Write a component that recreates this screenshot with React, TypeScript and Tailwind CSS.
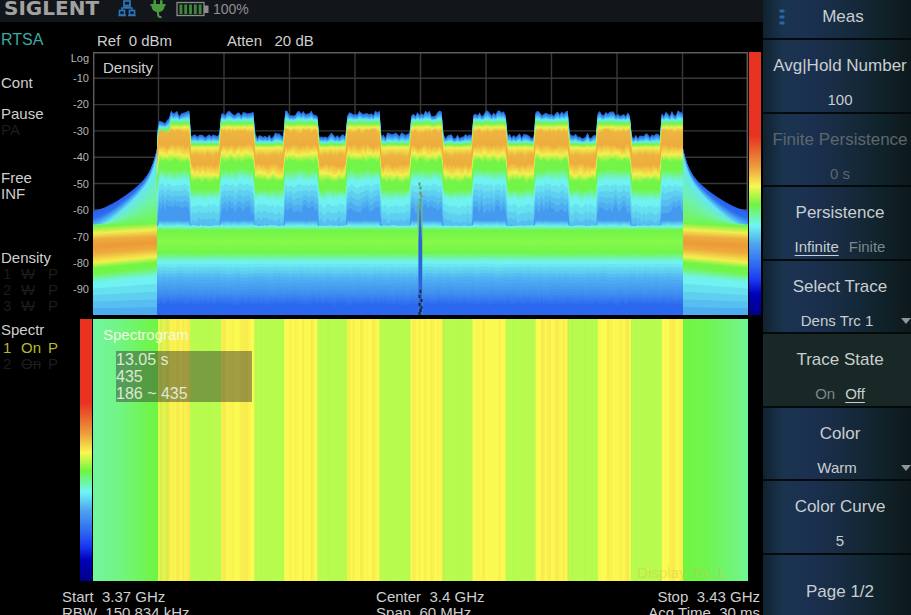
import { useState } from "react";
import type { ReactNode } from "react";

const W = 654;
const H = 262;

// edges of the raised carriers, in plot units
const CARRIERS = [
  [65, 97],
  [128, 161],
  [191, 224],
  [254, 286],
  [317, 349],
  [379, 412],
  [442, 474],
  [504, 537],
  [568, 589],
];
const BAND_START = 64;
const BAND_END = 589;

const random = (seed: number) => {
  let s = seed;
  return () => {
    s = (s * 16807) % 2147483647;
    return s / 2147483647;
  };
};

const isCarrier = (x: number) => CARRIERS.some(([a, b]) => x >= a && x <= b);

type Stop = { color: string; high: number; low: number; noise: number };

const BAND_STOPS: Stop[] = [
  { color: "#2563d8", high: 61, low: 83, noise: 6 },
  { color: "#3f9cf2", high: 64, low: 86, noise: 5 },
  { color: "#64ecec", high: 67, low: 89, noise: 2 },
  { color: "#72f548", high: 71, low: 92, noise: 1 },
  { color: "#f2ee50", high: 75, low: 95, noise: 1 },
  { color: "#edb440", high: 79, low: 102, noise: 4 },
  { color: "#edac3e", high: 92, low: 111, noise: 5 },
  { color: "#f5f04e", high: 101, low: 121, noise: 5 },
  { color: "#72f548", high: 108, low: 128, noise: 4 },
  { color: "#72f548", high: 116, low: 136, noise: 4 },
  { color: "#70f3f0", high: 127, low: 146, noise: 5 },
  { color: "#459af0", high: 156, low: 182, noise: 10 },
  { color: "#459af0", high: 167, low: 183, noise: 1 },
  { color: "#70f3f0", high: 173, low: 173, noise: 1 },
  { color: "#72f548", high: 177, low: 177, noise: 0 },
  { color: "#86f94a", high: 188, low: 188, noise: 1 },
  { color: "#72f548", high: 199, low: 199, noise: 1 },
  { color: "#70f3f0", high: 208, low: 208, noise: 1 },
  { color: "#50b2f2", high: 224, low: 224, noise: 2 },
  { color: "#3f8cf0", high: 240, low: 240, noise: 2 },
  { color: "#2b68f0", high: 251, low: 251, noise: 3 },
];

const SKIRT_COLORS = [
  "#2b60ee",
  "#2b6cf0",
  "#66e6f2",
  "#70f3a8",
  "#72f548",
  "#f2ee50",
  "#edac3e",
  "#ec9a38",
  "#edac3e",
  "#f5f04e",
  "#72f548",
  "#72f548",
  "#70f3f0",
  "#459af0",
];

// t runs from 0 at the plot border to 1 at the edge of the band
const skirtLevels = (t: number) => {
  const top = 158 - 42 * Math.pow(t, 1.5) - 20 * Math.pow(t, 12);
  return [
    top,
    top + 6 * (1 - t),
    top + 13 * (1 - t) + 5,
    Math.max(top + 12, 172 - 32 * t * t),
    173 - 3 * t,
    180 - 4 * t,
    186 - 3 * t,
    193 - 4 * t,
    200 - 5 * t,
    209 - 6 * t,
    215 - 6 * t,
    220 - 7 * t,
    229 - 6 * t,
    262,
  ];
};

const mix = (a: string, b: string, k: number) => {
  const part = (c: string, i: number) => parseInt(c.slice(i, i + 2), 16);
  const rgb = [1, 3, 5].map((i) =>
    Math.round(part(a, i) + (part(b, i) - part(a, i)) * k)
  );
  return `rgb(${rgb.join(",")})`;
};

// every layer is filled down to the bottom and the next one covers it
const buildLayers = (xs: number[], levels: number[][], colors: string[]) => {
  const steps = 5;
  const layers: { d: string; fill: string }[] = [];
  for (let k = 0; k < colors.length; k++) {
    const last = k === colors.length - 1;
    for (let s = 0; s < (last ? 1 : steps); s++) {
      const f = s / steps;
      const pts = xs.map((x, i) => {
        const y = last
          ? levels[i][k]
          : levels[i][k] + (levels[i][k + 1] - levels[i][k]) * f;
        return `${x} ${y.toFixed(1)}`;
      });
      layers.push({
        d: `M${xs[0]} ${H}L${pts.join("L")}L${xs[xs.length - 1]} ${H}Z`,
        fill: last ? colors[k] : mix(colors[k], colors[k + 1], f),
      });
    }
  }
  return layers;
};

const range = (from: number, to: number, step: number) => {
  const out: number[] = [];
  for (let x = from; x < to; x += step) out.push(x);
  out.push(to);
  return out;
};

const buildBand = () => {
  const rnd = random(77);
  const xs = range(BAND_START, BAND_END, 2);
  const levels = xs.map((x) => {
    const high = isCarrier(x);
    const shoulder = x < 77 ? 7 : 0;
    const edge = rnd() - 0.5;
    return BAND_STOPS.map((stop, i) => {
      const base = high ? stop.high + (i < 5 ? shoulder : 0) : stop.low;
      const jitter = i < 5 ? edge : rnd() - 0.5;
      return base + jitter * stop.noise;
    });
  });
  return buildLayers(
    xs,
    levels,
    BAND_STOPS.map((s) => s.color)
  );
};

const leftXs = range(0, BAND_START, 2);
const rightXs = range(BAND_END, W, 2);

const densityLayers = [
  ...buildLayers(
    leftXs,
    leftXs.map((x) => skirtLevels(x / BAND_START)),
    SKIRT_COLORS
  ),
  ...buildLayers(
    rightXs,
    rightXs.map((x) => skirtLevels((W - x) / (W - BAND_END))),
    SKIRT_COLORS
  ),
  ...buildBand(),
];

const buildStreaks = () => {
  const rnd = random(4242);
  return range(65, 587, 2).map((x) => ({
    x,
    fill: isCarrier(x) ? "#f0b040" : rnd() > 0.5 ? "#dcfa50" : "#9cf848",
    opacity: Math.pow(rnd(), 2) * (isCarrier(x) ? 0.26 : 0.14),
  }));
};
const streaks = buildStreaks();

const spurSpecks = [
  [325, 130, "#6a9a4a"],
  [326, 134, "#49a060"],
  [326, 139, "#8a8a50"],
  [327, 142, "#6f9a58"],
  [326, 146, "#5aa070"],
  [326, 237, "#14305a"],
  [325, 242, "#1b2c48"],
  [327, 246, "#162238"],
  [325, 250, "#101c30"],
  [327, 253, "#1b2c48"],
  [326, 256, "#0e1828"],
  [325, 259, "#142238"],
] as const;

const DensityPlot = () => (
  <svg
    viewBox={`0 0 ${W} ${H}`}
    preserveAspectRatio="none"
    className="block h-full w-full"
    aria-hidden="true"
  >
    <g stroke="#383838" strokeWidth="1.4">
      {range(0, 10, 1).map((i) => (
        <line key={`v${i}`} x1={i * 65.4} x2={i * 65.4} y1="0" y2={H} />
      ))}
      {range(0, 10, 1).map((i) => (
        <line key={`h${i}`} x1="0" x2={W} y1={i * 26.2} y2={i * 26.2} />
      ))}
    </g>
    <path d={`M0.7 ${H}V0.7H${W - 0.7}V${H}`} fill="none" stroke="#5c5c5c" strokeWidth="1.4" />
    {densityLayers.map((layer, i) => (
      <path key={i} d={layer.d} fill={layer.fill} />
    ))}
    <path d="M324 152L325 190L324.500 262H329.500L329 190V152L327.500 148Z" fill="#4a94c8" opacity="0.6" />
    <path d="M324.500 148V176M328.500 150V178" stroke="#7fc860" strokeWidth="1" />
    <path d="M326.500 154L325 190V262H328.500V190Z" fill="#2c64dc" />
    {spurSpecks.map(([x, y, fill]) => (
      <rect key={y} x={x} y={y} width="2" height="3" fill={fill} />
    ))}
  </svg>
);

const SpectrogramPlot = () => (
  <svg
    viewBox={`0 0 ${W} ${H}`}
    preserveAspectRatio="none"
    className="block h-full w-full"
    aria-hidden="true"
  >
    <defs>
      <linearGradient id="skirt-left">
        <stop offset="0" stopColor="#72f59e" />
        <stop offset="0.400" stopColor="#71f584" />
        <stop offset="0.800" stopColor="#70f554" />
        <stop offset="1" stopColor="#70f542" />
      </linearGradient>
      <linearGradient id="skirt-right">
        <stop offset="0" stopColor="#70f542" />
        <stop offset="0.400" stopColor="#70f552" />
        <stop offset="0.800" stopColor="#71f57c" />
        <stop offset="1" stopColor="#72f592" />
      </linearGradient>
    </defs>
    <rect width={W} height={H} fill="#b8fb50" />
    <rect width="65" height={H} fill="url(#skirt-left)" />
    <rect x={BAND_END} width="65" height={H} fill="url(#skirt-right)" />
    {CARRIERS.map(([a, b]) => (
      <rect key={a} x={a} width={b - a} height={H} fill="#fbfb52" />
    ))}
    <rect x="65" width="11" height={H} fill="#dcfb50" />
    {streaks.map((s) => (
      <rect key={s.x} x={s.x} width="2" height={H} fill={s.fill} opacity={s.opacity} />
    ))}
  </svg>
);

const ColorBar = () => (
  <div className="w-3 shrink-0 bg-[linear-gradient(to_bottom,#e83323_0%,#e83323_32%,#e8562a_36%,#eca03e_44%,#f8f850_51%,#6ff442_58%,#6ff5f5_66%,#4fa4f0_73%,#2a62f0_82%,#1a34f0_87%,#0000b8_92%,#000088_100%)]" />
);

const TraceRow = ({ n, mode, className }: { n: string; mode: ReactNode; className: string }) => (
  <div className={`grid grid-cols-[18px_27px_auto] justify-start pl-0.5 ${className}`}>
    <span>{n}</span>
    <span>{mode}</span>
    <span>P</span>
  </div>
);

const StatusColumn = () => (
  <aside className="w-[60px] shrink-0 pt-2.5 pl-px text-[15px] leading-4 whitespace-nowrap">
    <p className="text-base leading-4 text-[#3fa8a0]">RTSA</p>
    <p className="mt-[27px]">Cont</p>
    <p className="mt-[15px]">Pause</p>
    <p className="text-[#1c1c1c]">PA</p>
    <p className="mt-8">Free</p>
    <p>INF</p>
    <p className="mt-12">Density</p>
    <TraceRow n="1" mode={<s>W</s>} className="text-[#1c1c1c]" />
    <TraceRow n="2" mode={<s>W</s>} className="text-[#1c1c1c]" />
    <TraceRow n="3" mode={<s>W</s>} className="text-[#1c1c1c]" />
    <p className="mt-2 mb-0.5">Spectr</p>
    <TraceRow n="1" mode="On" className="text-[#b8b832]" />
    <TraceRow n="2" mode={<s>On</s>} className="text-[#1c1c1c]" />
  </aside>
);

const NetworkIcon = () => (
  <svg width="18" height="17" viewBox="0 0 18 17" fill="none" stroke="#2a76b8" strokeWidth="1.7" aria-hidden="true">
    <rect x="6" y="1" width="6" height="4.500" />
    <rect x="1.500" y="10.500" width="5" height="4.500" />
    <rect x="11.500" y="10.500" width="5" height="4.500" />
    <path d="M9 5.500V8M4 10.500V8H14V10.500M5 7H13M0.500 15.500H8M10 15.500H17.500" strokeWidth="1.500" />
  </svg>
);

const PlugIcon = () => (
  <svg width="16" height="19" viewBox="0 0 16 19" fill="#4a9a40" aria-hidden="true">
    <rect x="3.500" y="0" width="2.500" height="5" rx="1" />
    <rect x="10" y="0" width="2.500" height="5" rx="1" />
    <path d="M0.500 4H15.500V6H14.500C14.500 9 12.500 11.500 9.500 12H6.500C3.500 11.500 1.500 9 1.500 6H0.500Z" />
    <path d="M8 11V14.500C8 16.500 9 17.300 11.500 17.300" fill="none" stroke="#4a9a40" strokeWidth="2" />
  </svg>
);

const BatteryIcon = () => (
  <svg width="33" height="16" viewBox="0 0 33 16" aria-hidden="true">
    <rect x="1" y="1.500" width="27" height="13" fill="none" stroke="#8c8c8c" strokeWidth="1.300" />
    <rect x="28" y="4.500" width="4.500" height="7.500" fill="#8c8c8c" />
    {[3.5, 8.3, 13.1, 17.900, 22.700].map((x) => (
      <rect key={x} x={x} y="3.500" width="2.800" height="9.500" fill="#3f8a3a" />
    ))}
  </svg>
);

const KEY = "relative border-b-2 border-[#04090c] pt-4 text-center leading-5";
const KEY_BLUE =
  "bg-[linear-gradient(to_right,#10222e_0%,#1a3450_14%,#1b3050_32%,#172b40_55%,#10232c_78%,#0d191c_100%)]";
const TITLE = "block pl-1.5 text-[17px] whitespace-nowrap";

const ValueKey = ({ id, title, value, disabled }: { id: string; title: string; value: string; disabled?: boolean }) => (
  <div className={`${KEY} ${KEY_BLUE} ${disabled ? "text-[#5d676c]" : ""}`}>
    <label htmlFor={id} className={TITLE}>
      {title}
    </label>
    <input
      id={id}
      defaultValue={value}
      disabled={disabled}
      className="mt-3.5 block h-5 w-full bg-transparent pl-1.5 text-center text-[15px] outline-none"
    />
  </div>
);

const SelectKey = ({ id, title, options }: { id: string; title: string; options: string[] }) => (
  <div className={`${KEY} ${KEY_BLUE}`}>
    <label htmlFor={id} className={TITLE}>
      {title}
    </label>
    <select
      id={id}
      className="mt-3.5 block h-5 w-full appearance-none bg-transparent text-center text-[15px] outline-none"
    >
      {options.map((o) => (
        <option key={o}>{o}</option>
      ))}
    </select>
    <svg
      width="10"
      height="6"
      viewBox="0 0 10 6"
      className="pointer-events-none absolute right-0 bottom-2"
      aria-hidden="true"
    >
      <path d="M0 0H10L5 6Z" fill="#8f9698" />
    </svg>
  </div>
);

const ToggleKey = ({
  title,
  options,
  initial,
  background,
}: {
  title: string;
  options: string[];
  initial: string;
  background: string;
}) => {
  const [selected, setSelected] = useState(initial);

  return (
    <fieldset className={`${KEY} ${background}`}>
      <span className={TITLE}>{title}</span>
      <div className="mt-3.5 flex justify-center gap-2.5 pl-1.5 text-[15px]">
        {options.map((o) => (
          <label
            key={o}
            className={
              selected === o
                ? "cursor-pointer underline underline-offset-3"
                : "cursor-pointer text-[#7d868a]"
            }
          >
            <input
              type="radio"
              name={title}
              checked={selected === o}
              onChange={() => setSelected(o)}
              className="sr-only"
            />
            {o}
          </label>
        ))}
      </div>
    </fieldset>
  );
};

const SoftKeys = () => (
  <nav className="w-[148px] shrink-0 text-[#c9ced0]">
    <button
      className={`relative block h-10 w-full border-b-2 border-[#04090c] pb-1 pl-3 text-[17px] ${KEY_BLUE}`}
    >
      <svg width="6" height="18" viewBox="0 0 6 18" className="absolute top-2 left-4" aria-hidden="true">
        {[1.5, 7.5, 13.5].map((y) => (
          <rect key={y} x="0.500" y={y} width="5" height="3" rx="1" fill="#2668a8" />
        ))}
      </svg>
      Meas
    </button>
    <div className="grid h-[588px] auto-rows-fr">
      <ValueKey id="avg" title="Avg|Hold Number" value="100" />
      <ValueKey id="finite" title="Finite Persistence" value="0 s" disabled />
      <ToggleKey title="Persistence" options={["Infinite", "Finite"]} initial="Infinite" background={KEY_BLUE} />
      <SelectKey id="trace" title="Select Trace" options={["Dens Trc 1"]} />
      <ToggleKey title="Trace State" options={["On", "Off"]} initial="Off" background="bg-[#182826]" />
      <SelectKey id="color" title="Color" options={["Warm"]} />
      <ValueKey id="curve" title="Color Curve" value="5" />
      <button className={`pl-1.5 text-[17px] ${KEY_BLUE}`}>Page 1/2</button>
    </div>
  </nav>
);

const App = () => (
  <div className="flex h-screen overflow-hidden bg-black font-['Liberation_Sans',Arial,sans-serif] text-[#cfcfcf]">
    <div className="flex min-w-0 flex-1 flex-col">
      <header className="flex h-[22px] shrink-0 items-start bg-[#12161b]">
        <h1 className="w-[118px] pl-1 font-['DejaVu_Sans',sans-serif] text-[20px] leading-4 font-bold text-[#a2a2a2]">
          SIGLENT
        </h1>
        <div className="flex items-start gap-3.5">
          <NetworkIcon />
          <PlugIcon />
        </div>
        <div className="ml-2.5 flex items-center gap-1">
          <BatteryIcon />
          <span className="text-sm leading-[18px] text-[#8f8f8f]">100%</span>
        </div>
      </header>

      <div className="flex">
        <StatusColumn />

        <main className="min-w-0 flex-1 text-[15px] whitespace-pre">
          <div className="flex h-[30px] pt-[11px] pl-[37px] leading-4">
            <span className="w-[130px]">{"Ref  0 dBm"}</span>
            <span>{"Atten   20 dB"}</span>
          </div>

          <section className="flex h-[263px]">
            <div className="flex w-[33px] shrink-0 flex-col pr-1 pb-3 text-right text-[11px] text-[#b4b4b4]">
              <span className="h-[13px] leading-[13px]">Log</span>
              {[10, 20, 30, 40, 50, 60, 70, 80, 90].map((v) => (
                <span key={v} className="flex flex-1 items-center justify-end">
                  -{v}
                </span>
              ))}
            </div>
            <div className="relative min-w-0 flex-1">
              <DensityPlot />
              <h2 className="absolute top-2 left-2.5 leading-4">Density</h2>
            </div>
            <div className="mr-0.5 ml-px flex">
              <ColorBar />
            </div>
          </section>

          <section className="mt-1 flex h-[262px] pr-[15px] pl-5">
            <ColorBar />
            <div className="relative ml-px min-w-0 flex-1">
              <SpectrogramPlot />
              <h2 className="absolute top-2 left-2.5 leading-4 text-[#f4fbe0]">Spectrogram</h2>
              <div className="absolute top-8 left-[23px] w-[136px] bg-[#303030]/45 text-base leading-[17px] text-[#dcead0]">
                <p>13.05 s</p>
                <p>435</p>
                <p>186 ~ 435</p>
              </div>
              <span className="absolute right-6 bottom-0 leading-4 text-[#e0b040]/35">
                Display Trc 1
              </span>
            </div>
          </section>

          <footer className="flex pt-2 pr-[3px] pl-0.5 leading-4">
            <div className="w-[45%]">
              <p>{"Start  3.37 GHz"}</p>
              <p>{"RBW  150.834 kHz"}</p>
            </div>
            <div className="flex-1">
              <p>{"Center  3.4 GHz"}</p>
              <p>{"Span  60 MHz"}</p>
            </div>
            <div className="text-right">
              <p>{"Stop  3.43 GHz"}</p>
              <p>{"Acq Time  30 ms"}</p>
            </div>
          </footer>
        </main>
      </div>
    </div>

    <SoftKeys />
  </div>
);

export default App;
